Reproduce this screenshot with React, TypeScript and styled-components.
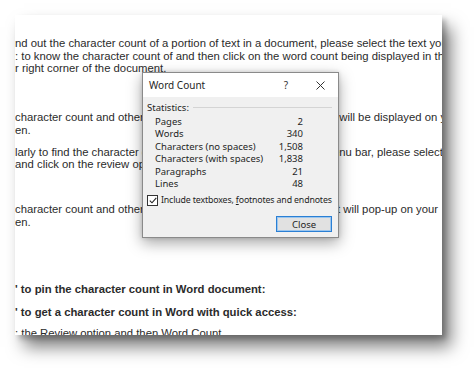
import React from "react";
import styled, { createGlobalStyle } from "styled-components";

const GlobalStyle = createGlobalStyle`
  html, body {
    margin: 0;
    padding: 0;
    background: #ffffff;
  }
`;

const Stage = styled.div`
  width: 474px;
  height: 368px;
  box-sizing: border-box;
  padding: 15px 32px 0 15px;
  background: #ffffff;
  overflow: hidden;
`;

const Sheet = styled.div`
  position: relative;
  width: 427px;
  height: 320px;
  padding-top: 22px;
  box-sizing: border-box;
  background: #ffffff;
  overflow: hidden;
  box-shadow: 9px 12px 16px rgba(0, 0, 0, 0.5), 4px 4px 5px rgba(0, 0, 0, 0.22);
  font-family: "Liberation Sans", Arial, sans-serif;
  font-size: 11.3px;
  color: #2b2b2b;
`;

const Para = styled.div<{ $top: number; $bold?: boolean }>`
  margin-top: ${p => p.$top}px;
  font-weight: ${p => (p.$bold ? 700 : 400)};
`;

const Line = styled.div<{ $split?: number }>`
  display: flex;
  height: 12.5px;
  line-height: 12.5px;
  white-space: nowrap;

  & > span:first-child {
    flex: ${p => (p.$split ? `0 0 ${p.$split}px` : "1 1 auto")};
    overflow: hidden;
  }
`;

const Dialog = styled.div`
  position: absolute;
  left: 127px;
  top: 57px;
  width: 197px;
  height: 166px;
  box-sizing: border-box;
  border: 1px solid #8a8a8a;
  background: #f0f0f0;
  box-shadow: 0 5px 14px rgba(0, 0, 0, 0.35), 0 0 4px rgba(0, 0, 0, 0.15);
  display: flex;
  flex-direction: column;
  font-family: "Noto Sans", "Open Sans", sans-serif;
  font-size: 9.5px;
  color: #1e1e1e;
`;

const TitleBar = styled.div`
  height: 24px;
  flex: 0 0 24px;
  background: #ffffff;
  display: flex;
  align-items: center;
  padding-left: 6px;
  font-size: 10px;
`;

const TitleText = styled.div`
  flex: 1;
`;

const TitleButton = styled.div<{ $w: number }>`
  width: ${p => p.$w}px;
  height: 24px;
  display: flex;
  align-items: center;
  justify-content: center;
  color: #333;
`;

const Body = styled.div`
  flex: 1;
  display: flex;
  flex-direction: column;
  padding: 4px 5px 0 4px;
`;

const GroupHead = styled.div`
  display: flex;
  align-items: center;
  height: 12px;
  gap: 4px;

  &::after {
    content: "";
    flex: 1;
    height: 1px;
    background: #d4d4d4;
    margin-right: 1px;
  }
`;

const Stats = styled.div`
  display: grid;
  grid-template-columns: 1fr auto;
  width: 148px;
  margin: 3px 0 0 8px;
  grid-auto-rows: 12.4px;
  line-height: 12.4px;
`;

const Value = styled.span`
  text-align: right;
`;

const CheckRow = styled.label`
  display: flex;
  align-items: center;
  gap: 3px;
  height: 12px;
  margin-top: 4px;
  white-space: nowrap;
  font-size: 8.8px;
  letter-spacing: -0.15px;
`;

const Box = styled.span`
  flex: 0 0 auto;
  width: 9px;
  height: 9px;
  border: 1px solid #333;
  background: #fff;
  display: flex;
  align-items: center;
  justify-content: center;
`;

const Footer = styled.div`
  display: flex;
  justify-content: flex-end;
  margin-top: 10px;
  padding-right: 1px;
`;

const Button = styled.div`
  width: 56px;
  height: 16px;
  box-sizing: border-box;
  border: 1px solid #2a7fd4;
  box-shadow: inset 0 0 0 1px #9cc6ee;
  background: #e1e1e1;
  display: flex;
  align-items: center;
  justify-content: center;
  font-size: 9.5px;
`;

const stats: [string, string][] = [
  ["Pages", "2"],
  ["Words", "340"],
  ["Characters (no spaces)", "1,508"],
  ["Characters (with spaces)", "1,838"],
  ["Paragraphs", "21"],
  ["Lines", "48"],
];

export default function App() {
  return (
    <>
      <GlobalStyle />
      <Stage>
        <Sheet>
          <Para $top={0}>
            <Line><span>nd out the character count of a portion of text in a document, please select the text you</span></Line>
            <Line><span>: to know the character count of and then click on the word count being displayed in the</span></Line>
            <Line><span>r right corner of the document.</span></Line>
          </Para>
          <Para $top={36.5}>
            <Line $split={318}><span>character count and other statistics like words, pages, lines etc.</span><span>t will be displayed on your</span></Line>
            <Line><span>en.</span></Line>
          </Para>
          <Para $top={9.5}>
            <Line $split={318}><span>larly to find the character count from the m</span><span>enu bar, please select</span></Line>
            <Line><span>and click on the review option.</span></Line>
          </Para>
          <Para $top={32.5}>
            <Line $split={322}><span>character count and other statistics, a dialog box tha</span><span>t will pop-up on your</span></Line>
            <Line><span>en.</span></Line>
          </Para>
          <Para $top={54.5} $bold>
            <Line><span>' to pin the character count in Word document:</span></Line>
          </Para>
          <Para $top={10.5} $bold>
            <Line><span>' to get a character count in Word with quick access:</span></Line>
          </Para>
          <Para $top={8.5}>
            <Line><span>: the Review option and then Word Count</span></Line>
          </Para>

          <Dialog>
            <TitleBar>
              <TitleText>Word Count</TitleText>
              <TitleButton $w={32}>?</TitleButton>
              <TitleButton $w={36}>
                <svg width="9" height="9" viewBox="0 0 9 9">
                  <path d="M0.5 0.5 L8.5 8.5 M8.5 0.5 L0.5 8.5" stroke="#333" strokeWidth="1" />
                </svg>
              </TitleButton>
            </TitleBar>
            <Body>
              <GroupHead>Statistics:</GroupHead>
              <Stats>
                {stats.map(([k, v]) => (
                  <React.Fragment key={k}>
                    <span>{k}</span>
                    <Value>{v}</Value>
                  </React.Fragment>
                ))}
              </Stats>
              <CheckRow>
                <Box>
                  <svg width="8" height="7" viewBox="0 0 8 7">
                    <path d="M0.8 3.6 L3 5.8 L7.3 0.9" stroke="#222" strokeWidth="1.1" fill="none" />
                  </svg>
                </Box>
                <span>
                  Include textboxes, <u>f</u>ootnotes and endnotes
                </span>
              </CheckRow>
              <Footer>
                <Button>Close</Button>
              </Footer>
            </Body>
          </Dialog>
        </Sheet>
      </Stage>
    </>
  );
}
